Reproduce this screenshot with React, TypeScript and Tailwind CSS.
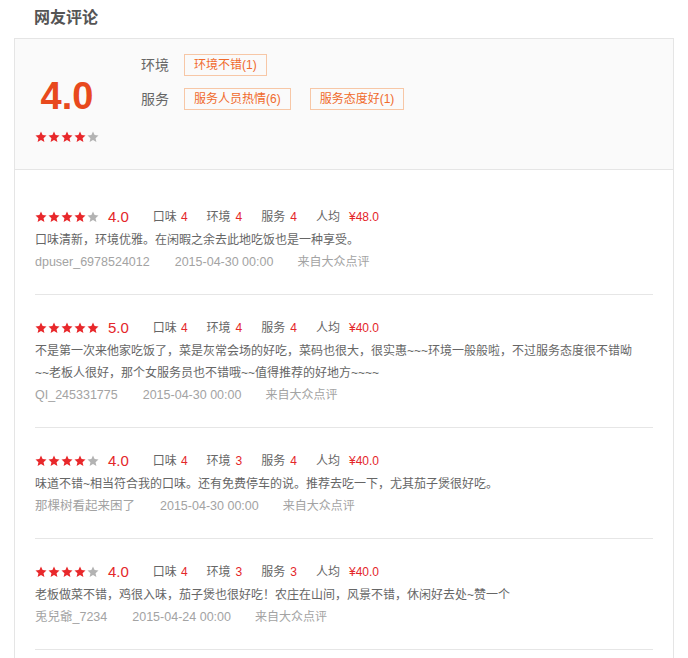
import React from "react";

const FONT = { fontFamily: '"Liberation Sans", "Noto Sans CJK SC", sans-serif' };

function Stars({ n }: { n: number }) {
  return (
    <div className="flex gap-[1px]">
      {[0, 1, 2, 3, 4].map((i) => (
        <svg key={i} width="12" height="12" viewBox="0 0 24 24">
          <polygon
            points="12,1 15.2,8.2 23,9 17.1,14.3 18.8,22 12,18 5.2,22 6.9,14.3 1,9 8.8,8.2"
            fill={i < n ? "#e8282b" : "#b3b3b3"}
          />
        </svg>
      ))}
    </div>
  );
}

type Review = {
  stars: number;
  score: string;
  taste: string;
  env: string;
  service: string;
  price: string;
  lines: string[];
  user: string;
  date: string;
};

const reviews: Review[] = [
  {
    stars: 4,
    score: "4.0",
    taste: "4",
    env: "4",
    service: "4",
    price: "¥48.0",
    lines: ["口味清新，环境优雅。在闲暇之余去此地吃饭也是一种享受。"],
    user: "dpuser_6978524012",
    date: "2015-04-30 00:00",
  },
  {
    stars: 5,
    score: "5.0",
    taste: "4",
    env: "4",
    service: "4",
    price: "¥40.0",
    lines: [
      "不是第一次来他家吃饭了，菜是灰常会场的好吃，菜码也很大，很实惠~~~环境一般般啦，不过服务态度很不错呦",
      "~~老板人很好，那个女服务员也不错哦~~值得推荐的好地方~~~~",
    ],
    user: "QI_245331775",
    date: "2015-04-30 00:00",
  },
  {
    stars: 4,
    score: "4.0",
    taste: "4",
    env: "3",
    service: "4",
    price: "¥40.0",
    lines: ["味道不错~相当符合我的口味。还有免费停车的说。推荐去吃一下，尤其茄子煲很好吃。"],
    user: "那棵树看起来困了",
    date: "2015-04-30 00:00",
  },
  {
    stars: 4,
    score: "4.0",
    taste: "4",
    env: "3",
    service: "3",
    price: "¥40.0",
    lines: ["老板做菜不错，鸡很入味，茄子煲也很好吃！农庄在山间，风景不错，休闲好去处~赞一个"],
    user: "兎兒爺_7234",
    date: "2015-04-24 00:00",
  },
];

function ReviewItem({ r }: { r: Review }) {
  return (
    <div className="border-b border-[#e6e6e6] pt-[21px] pb-[21px]">
      <div className="flex h-[24px] items-center text-[12px]">
        <Stars n={r.stars} />
        <span className="ml-[9px] text-[15px] leading-[24px] text-[#e4262a]">{r.score}</span>
        <span className="ml-[24px] text-[#666]">
          口味<span className="ml-[4px] text-[#e4262a]">{r.taste}</span>
        </span>
        <span className="ml-[19px] text-[#666]">
          环境<span className="ml-[5px] text-[#e4262a]">{r.env}</span>
        </span>
        <span className="ml-[19px] text-[#666]">
          服务<span className="ml-[5px] text-[#e4262a]">{r.service}</span>
        </span>
        <span className="ml-[19px] text-[#666]">
          人均<span className="ml-[9px] text-[#e4262a]">{r.price}</span>
        </span>
      </div>
      <div className="text-[12px] leading-[22px] text-[#666]">
        {r.lines.map((l, i) => (
          <div key={i} className="whitespace-nowrap">
            {l}
          </div>
        ))}
      </div>
      <div className="flex h-[22px] items-center text-[#a3a3a3]">
        <span className="text-[12.5px]">{r.user}</span>
        <span className="ml-[25px] text-[12.5px]">{r.date}</span>
        <span className="ml-[24px] text-[12px]">来自大众点评</span>
      </div>
    </div>
  );
}

export default function App() {
  return (
    <div className="min-h-[658px] w-[688px] bg-white" style={FONT}>
      <div className="h-[38px] pl-[34px] text-[16px] font-bold leading-[36px] text-[#555]">网友评论</div>
      <div className="ml-[14px] min-h-[620px] w-[660px] border border-b-0 border-[#e5e5e5]">
        <div className="flex h-[131px] border-b border-[#e5e5e5] bg-[#fafafa] pl-[20px]">
          <div className="flex w-[64px] flex-col items-center pt-[38px]">
            <div className="text-[38px] font-bold leading-[38px] text-[#e8491d]">4.0</div>
            <div className="mt-[16px]">
              <Stars n={4} />
            </div>
          </div>
          <div className="ml-[42px] pt-[15px]">
            <div className="flex h-[22px] items-center">
              <span className="w-[43px] text-[14px] text-[#666]">环境</span>
              <span className="h-[22px] border border-[#f7c7a6] px-[9px] text-[12px] leading-[20px] text-[#f06a2c]">
                环境不错(1)
              </span>
            </div>
            <div className="mt-[12px] flex h-[22px] items-center">
              <span className="w-[43px] text-[14px] text-[#666]">服务</span>
              <span className="h-[22px] border border-[#f7c7a6] px-[9px] text-[12px] leading-[20px] text-[#f06a2c]">
                服务人员热情(6)
              </span>
              <span className="ml-[19px] h-[22px] border border-[#f7c7a6] px-[9px] text-[12px] leading-[20px] text-[#f06a2c]">
                服务态度好(1)
              </span>
            </div>
          </div>
        </div>
        <div className="px-[20px] pt-[14px]">
          {reviews.map((r, i) => (
            <ReviewItem key={i} r={r} />
          ))}
        </div>
      </div>
    </div>
  );
}
